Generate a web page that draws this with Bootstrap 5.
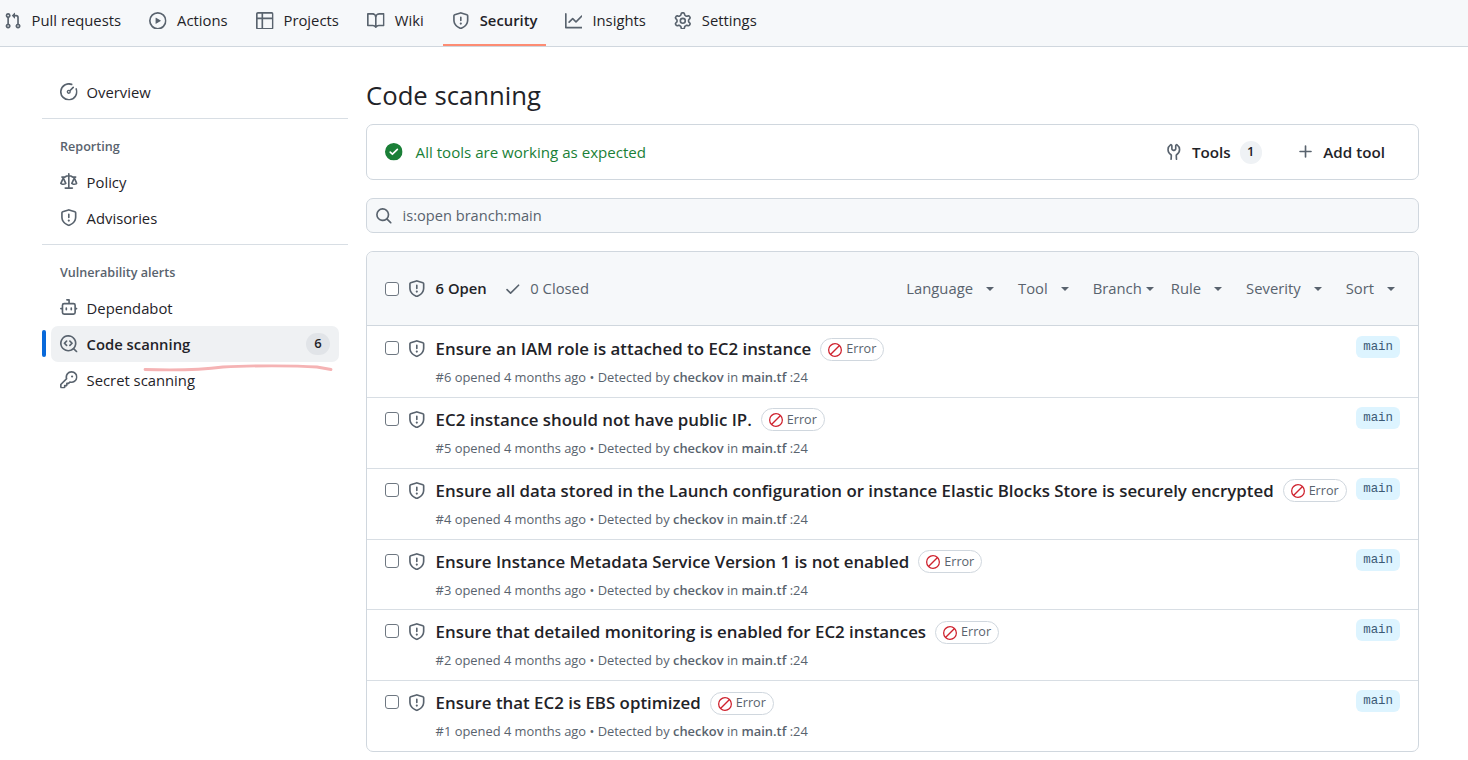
<!DOCTYPE html>
<html lang="en">
<head>
    <meta charset="UTF-8">
    <title>Code scanning</title>
    <link href="https://cdn.jsdelivr.net/npm/bootstrap@5.3.0/dist/css/bootstrap.min.css" rel="stylesheet">
    <style>
        body { font-family: "Open Sans", "Noto Sans", sans-serif; font-size: 14.8px; color: #1f2328; background: #fff; overflow: hidden; }
        svg.oct { width: 17.6px; height: 17.6px; fill: #59636e; flex: none; }

        .repo-tabs { height: 47px; background: #f6f8fa; border-bottom: 1px solid #d0d7de; padding-left: 4px; }
        .repo-tab { height: 46px; padding-bottom: 5px; margin-right: 28.4px; color: #1f2328; text-decoration: none; gap: 10px; }
        .repo-tab.active { font-weight: 600; border-bottom: 2px solid #fd8c73; padding: 0 9px 3px 9px; margin: 0 18.4px 0 -9px; }

        .page-wrap { padding: 0 49px 0 42px; gap: 18px; }
        .side-col { width: 306px; flex: none; padding-top: 27px; }
        .main-col { flex: 1; padding-top: 27px; min-width: 0; }

        .side-item { height: 36px; padding-left: 18px; gap: 9px; color: #1f2328; text-decoration: none; position: relative; margin-right: 9px; border-radius: 7px; }
        .side-item.current { background: #eff1f3; font-weight: 600; margin-left: 9px; padding-left: 9px; }
        .side-item.current::before { content: ""; position: absolute; left: -9px; top: 4px; bottom: 5px; width: 4px; border-radius: 3px; background: #0969da; }
        .side-head { font-size: 12.6px; font-weight: 600; color: #59636e; padding: 1px 0 0 18px; height: 28px; margin-bottom: 3px; display: flex; align-items: center; }
        .side-rule { border-top: 1px solid #d8dee4; margin: 8px 0 14px; }
        .count-pill { margin-left: auto; margin-right: 9px; background: #e1e4e8; border-radius: 12px; font-size: 13px; font-weight: 600; width: 24px; height: 22px; display: flex; align-items: center; justify-content: center; }
        .pink-mark { position: absolute; left: 94px; top: 38px; width: 186px; height: 8px; overflow: visible; pointer-events: none; }

        .page-title { font-size: 25.7px; font-weight: 400; line-height: 36px; margin: 4px 0 10px; }
        .tools-box { height: 56px; border: 1px solid #d0d7de; border-radius: 7px; padding: 0 33px 0 18px; }
        .tools-ok { color: #1a7f37; gap: 13px; font-size: 15.1px; }
        .tools-ok svg.oct { fill: #1a7f37; }
        .tool-link { font-weight: 600; gap: 9px; font-size: 15.2px; }
        .tool-num { background: #eff2f5; border-radius: 12px; width: 22px; height: 23px; font-size: 13px; display: flex; align-items: center; justify-content: center; margin-right: 35px; }
        .filter-box { height: 35px; margin: 18px 0; background: #f6f8fa; border: 1px solid #d0d7de; border-radius: 7px; padding-left: 8px; gap: 10px; color: #59636e; font-size: 14.6px; }

        .alerts-box { border: 1px solid #d0d7de; border-radius: 7px; }
        .alerts-top { height: 74px; background: #f6f8fa; border-bottom: 1px solid #d0d7de; border-radius: 7px 7px 0 0; padding: 0 23px 0 18px; }
        .tick { width: 14px; height: 14px; border: 1px solid #6e7781; border-radius: 3px; flex: none; background: #fff; margin-right: 9px; }
        .alert-row .tick { margin-top: 5px; }
        .row-shield { margin-right: 10px; }
        .open-count { font-weight: 600; }
        .closed-count { color: #59636e; gap: 9px; margin-left: 17px; }
        .filter-menu { color: #59636e; margin-left: auto; }
        .filter-item { display: flex; align-items: center; }
        .caret-down { border-top: 4px solid #59636e; border-left: 4px solid transparent; border-right: 4px solid transparent; width: 0; height: 0; margin: 0 24px 0 13px; }
        .caret-down.tight { margin: 0 17px 0 4px; }
        .caret-down.last { margin-right: 0; }

        .alert-row { height: 70.85px; padding: 9px 18px 0 18px; border-top: 1px solid #d8dee4; }
        .alert-row:first-child { border-top: 0; padding-top: 10px; }
        .alert-title { font-size: 16.85px; font-weight: 600; line-height: 26px; white-space: nowrap; }
        .alert-meta { font-size: 12.9px; color: #59636e; line-height: 18px; margin-top: 6px; }
        .alert-meta b { font-weight: 600; }
        .error-tag { border: 1px solid #d0d7de; border-radius: 12px; font-size: 12.6px; color: #59636e; height: 23px; padding: 1px 7px 0; gap: 4px; margin-left: 9px; font-weight: 400; }
        .error-tag svg.oct { fill: #cf222e; width: 14px; height: 14px; }
        .branch-tag { font-family: "Liberation Mono", monospace; font-size: 12.4px; background: #ddf4ff; color: #3b5a75; border-radius: 6px; padding: 0 7px; height: 22px; line-height: 22px; margin-left: auto; }
    </style>
</head>
<body>
    <svg width="0" height="0" class="position-absolute">
        <symbol id="i-pr" viewBox="0 0 16 16"><path d="M1.5 3.25a2.25 2.25 0 1 1 3 2.122v5.256a2.251 2.251 0 1 1-1.5 0V5.372A2.25 2.25 0 0 1 1.5 3.25Zm5.677-.177L9.573.677A.25.25 0 0 1 10 .854V2.5h1A2.5 2.5 0 0 1 13.5 5v5.628a2.251 2.251 0 1 1-1.5 0V5a1 1 0 0 0-1-1h-1v1.646a.25.25 0 0 1-.427.177L7.177 3.427a.25.25 0 0 1 0-.354ZM3.75 2.5a.75.75 0 1 0 0 1.5.75.75 0 0 0 0-1.5Zm0 9.5a.75.75 0 1 0 0 1.5.75.75 0 0 0 0-1.5Zm8.25.75a.75.75 0 1 0 1.5 0 .75.75 0 0 0-1.5 0Z"/></symbol>
        <symbol id="i-play" viewBox="0 0 16 16"><path d="M8 0a8 8 0 1 1 0 16A8 8 0 0 1 8 0ZM1.5 8a6.5 6.5 0 1 0 13 0 6.5 6.5 0 0 0-13 0Zm4.879-2.773 4.264 2.559a.25.25 0 0 1 0 .428l-4.264 2.559A.25.25 0 0 1 6 10.559V5.442a.25.25 0 0 1 .379-.215Z"/></symbol>
        <symbol id="i-table" viewBox="0 0 16 16"><path d="M0 1.75C0 .784.784 0 1.75 0h12.5C15.216 0 16 .784 16 1.75v12.5A1.75 1.75 0 0 1 14.25 16H1.75A1.75 1.75 0 0 1 0 14.25ZM6.5 6.5v8h7.75a.25.25 0 0 0 .25-.25V6.5Zm8-1.5V1.75a.25.25 0 0 0-.25-.25H6.5V5Zm-13 1.5v7.75c0 .138.112.25.25.25H5v-8ZM5 5V1.5H1.75a.25.25 0 0 0-.25.25V5Z"/></symbol>
        <symbol id="i-book" viewBox="0 0 16 16"><path d="M0 1.75A.75.75 0 0 1 .75 1h4.253c1.227 0 2.317.59 3 1.501A3.743 3.743 0 0 1 11.006 1h4.245a.75.75 0 0 1 .75.75v10.5a.75.75 0 0 1-.75.75h-4.507a2.25 2.25 0 0 0-1.591.659l-.622.621a.75.75 0 0 1-1.06 0l-.622-.621A2.25 2.25 0 0 0 5.258 13H.75a.75.75 0 0 1-.75-.75Zm7.251 10.324.004-5.073-.002-2.253A2.25 2.25 0 0 0 5.003 2.5H1.5v9h3.757a3.75 3.75 0 0 1 1.994.574ZM8.755 4.75l-.004 7.322a3.752 3.752 0 0 1 1.992-.572H14.5v-9h-3.495a2.25 2.25 0 0 0-2.25 2.25Z"/></symbol>
        <symbol id="i-shield" viewBox="0 0 16 16"><path d="M7.467.133a1.748 1.748 0 0 1 1.066 0l5.25 1.68A1.75 1.75 0 0 1 15 3.48V7c0 1.566-.32 3.182-1.303 4.682-.983 1.498-2.585 2.813-5.032 3.855a1.697 1.697 0 0 1-1.33 0c-2.447-1.042-4.049-2.357-5.032-3.855C1.32 10.182 1 8.566 1 7V3.48a1.75 1.75 0 0 1 1.217-1.667Zm.61 1.429a.25.25 0 0 0-.153 0l-5.25 1.68a.25.25 0 0 0-.174.238V7c0 1.358.275 2.666 1.057 3.86.784 1.194 2.121 2.34 4.366 3.297a.196.196 0 0 0 .154 0c2.245-.956 3.582-2.104 4.366-3.298C13.225 9.666 13.5 8.36 13.5 7V3.48a.25.25 0 0 0-.174-.237l-5.25-1.68ZM8.75 4.75v3a.75.75 0 0 1-1.5 0v-3a.75.75 0 0 1 1.5 0ZM9 10.5a1 1 0 1 1-2 0 1 1 0 0 1 2 0Z"/></symbol>
        <symbol id="i-graph" viewBox="0 0 16 16"><path d="M1.5 1.75V13.5h13.75a.75.75 0 0 1 0 1.5H.75a.75.75 0 0 1-.75-.75V1.75a.75.75 0 0 1 1.5 0Zm14.28 2.53-5.25 5.25a.75.75 0 0 1-1.06 0L7 7.06 4.28 9.78a.751.751 0 0 1-1.042-.018.751.751 0 0 1-.018-1.042l3.25-3.25a.75.75 0 0 1 1.06 0L10 7.94l4.72-4.72a.751.751 0 0 1 1.042.018.751.751 0 0 1 .018 1.042Z"/></symbol>
        <symbol id="i-gear" viewBox="0 0 16 16"><path d="M8 0a8.2 8.2 0 0 1 .701.031C9.444.095 9.99.645 10.16 1.29l.288 1.107c.018.066.079.158.212.224.231.114.454.243.668.386.123.082.233.09.299.071l1.103-.303c.644-.176 1.392.021 1.82.63.27.385.506.792.704 1.218.315.675.111 1.422-.364 1.891l-.814.806c-.049.048-.098.147-.088.294.016.257.016.515 0 .772-.01.147.038.246.088.294l.814.806c.475.469.679 1.216.364 1.891a7.977 7.977 0 0 1-.704 1.217c-.428.61-1.176.807-1.82.63l-1.102-.302c-.067-.019-.177-.011-.3.071a5.909 5.909 0 0 1-.668.386c-.133.066-.194.158-.211.224l-.29 1.106c-.168.646-.715 1.196-1.458 1.26a8.006 8.006 0 0 1-1.402 0c-.743-.064-1.289-.614-1.458-1.26l-.289-1.106c-.018-.066-.079-.158-.212-.224a5.738 5.738 0 0 1-.668-.386c-.123-.082-.233-.09-.299-.071l-1.103.303c-.644.176-1.392-.021-1.82-.63a8.12 8.12 0 0 1-.704-1.218c-.315-.675-.111-1.422.363-1.891l.815-.806c.05-.048.098-.147.088-.294a6.214 6.214 0 0 1 0-.772c.01-.147-.038-.246-.088-.294l-.815-.806C.635 6.045.431 5.298.746 4.623a7.92 7.92 0 0 1 .704-1.217c.428-.61 1.176-.807 1.82-.63l1.102.302c.067.019.177.011.3-.071.214-.143.437-.272.668-.386.133-.066.194-.158.211-.224l.29-1.106C6.009.645 6.556.095 7.299.03 7.53.01 7.764 0 8 0Zm-.571 1.525c-.036.003-.108.036-.137.146l-.289 1.105c-.147.561-.549.967-.998 1.189-.173.086-.34.183-.5.29-.417.278-.97.423-1.529.27l-1.103-.303c-.109-.03-.175.016-.195.045-.22.312-.412.644-.573.99-.014.031-.021.11.059.19l.815.806c.411.406.562.957.53 1.456a4.709 4.709 0 0 0 0 .582c.032.499-.119 1.05-.53 1.456l-.815.806c-.081.08-.073.159-.059.19.162.346.353.677.573.989.02.03.085.076.195.046l1.102-.303c.56-.153 1.113-.008 1.53.27.161.107.328.204.501.29.447.222.85.629.997 1.189l.289 1.105c.029.109.101.143.137.146a6.6 6.6 0 0 0 1.142 0c.036-.003.108-.036.137-.146l.289-1.105c.147-.561.549-.967.998-1.189.173-.086.34-.183.5-.29.417-.278.97-.423 1.529-.27l1.103.303c.109.029.175-.016.195-.045.22-.313.411-.644.573-.99.014-.031.021-.11-.059-.19l-.815-.806c-.411-.406-.562-.957-.53-1.456a4.709 4.709 0 0 0 0-.582c-.032-.499.119-1.05.53-1.456l.815-.806c.081-.08.073-.159.059-.19a6.464 6.464 0 0 0-.573-.989c-.02-.03-.085-.076-.195-.046l-1.102.303c-.56.153-1.113.008-1.53-.27a4.44 4.44 0 0 0-.501-.29c-.447-.222-.85-.629-.997-1.189l-.289-1.105c-.029-.11-.101-.143-.137-.146a6.6 6.6 0 0 0-1.142 0ZM11 8a3 3 0 1 1-6 0 3 3 0 0 1 6 0ZM9.5 8a1.5 1.5 0 1 0-3.001.001A1.5 1.5 0 0 0 9.5 8Z"/></symbol>
        <symbol id="i-meter" viewBox="0 0 16 16"><path fill="none" stroke="#59636e" stroke-width="1.5" stroke-linecap="round" d="M10.6 1.25A7.25 7.25 0 1 0 14.75 5.4M9.2 6.8l2.8-2.8"/><circle cx="8" cy="8" r="1.3" fill="none" stroke="#59636e" stroke-width="1.2"/></symbol>
        <symbol id="i-law" viewBox="0 0 16 16"><path d="M8.75.75V2h.985c.304 0 .603.08.867.231l1.29.736c.038.022.08.033.124.033h2.234a.75.75 0 0 1 0 1.5h-.427l2.111 4.692a.75.75 0 0 1-.154.838l-.53-.53.529.531-.001.002-.002.002-.006.006-.006.005-.01.01-.045.04c-.21.176-.441.327-.686.45C14.556 10.78 13.88 11 13 11a4.498 4.498 0 0 1-2.023-.454 3.544 3.544 0 0 1-.686-.45l-.045-.04-.016-.015-.006-.006-.004-.004v-.001a.75.75 0 0 1-.154-.838L12.178 4.5h-.162c-.305 0-.604-.079-.868-.231l-1.29-.736a.245.245 0 0 0-.124-.033H8.75V13h2.5a.75.75 0 0 1 0 1.5h-6.5a.75.75 0 0 1 0-1.5h2.5V3.5h-.984a.245.245 0 0 0-.124.033l-1.289.737c-.265.15-.564.23-.869.23h-.162l2.112 4.692a.75.75 0 0 1-.154.838l-.53-.53.529.531-.001.002-.002.002-.006.006-.016.015-.045.04c-.21.176-.441.327-.686.45C4.556 10.78 3.88 11 3 11a4.498 4.498 0 0 1-2.023-.454 3.544 3.544 0 0 1-.686-.45l-.045-.04-.016-.015-.006-.006-.004-.004v-.001a.75.75 0 0 1-.154-.838L2.178 4.5H1.75a.75.75 0 0 1 0-1.5h2.234a.249.249 0 0 0 .125-.033l1.288-.737c.265-.15.564-.23.869-.23h.984V.75a.75.75 0 0 1 1.5 0Zm2.945 8.477c.285.135.718.273 1.305.273s1.02-.138 1.305-.273L13 6.327Zm-10 0c.285.135.718.273 1.305.273s1.02-.138 1.305-.273L3 6.327Z"/></symbol>
        <symbol id="i-bot" viewBox="0 0 16 16"><path d="M5.75 7.5a.75.75 0 0 1 .75.75v1.5a.75.75 0 0 1-1.5 0v-1.5a.75.75 0 0 1 .75-.75Zm5.25.75a.75.75 0 0 0-1.5 0v1.5a.75.75 0 0 0 1.5 0v-1.5Z"/><path d="M6.25 0h2A.75.75 0 0 1 9 .75V3.5h3.25a2.25 2.25 0 0 1 2.25 2.25V8h.75a.75.75 0 0 1 0 1.5h-.75v2.75a2.25 2.25 0 0 1-2.25 2.25h-8.5a2.25 2.25 0 0 1-2.25-2.25V9.5H.75a.75.75 0 0 1 0-1.5h.75V5.75A2.25 2.25 0 0 1 3.75 3.5H7.5v-2H6.25a.75.75 0 0 1 0-1.5ZM3 5.75v6.5c0 .414.336.75.75.75h8.5a.75.75 0 0 0 .75-.75v-6.5a.75.75 0 0 0-.75-.75h-8.5a.75.75 0 0 0-.75.75Z"/></symbol>
        <symbol id="i-scan" viewBox="0 0 16 16"><path d="M8.47 4.97a.75.75 0 0 0 0 1.06L9.94 7.5 8.47 8.97a.75.75 0 1 0 1.06 1.06l2-2a.75.75 0 0 0 0-1.06l-2-2a.75.75 0 0 0-1.06 0ZM6.53 6.03a.75.75 0 0 0-1.06-1.06l-2 2a.75.75 0 0 0 0 1.06l2 2a.75.75 0 1 0 1.06-1.06L5.06 7.5l1.47-1.47Z"/><path d="M12.246 13.307a7.501 7.501 0 1 1 1.06-1.06l2.474 2.473a.749.749 0 0 1-.326 1.275.749.749 0 0 1-.734-.215ZM1.5 7.5a6.002 6.002 0 0 0 3.608 5.504 6.002 6.002 0 0 0 6.486-1.117.748.748 0 0 1 .292-.293A6 6 0 1 0 1.5 7.5Z"/></symbol>
        <symbol id="i-key" viewBox="0 0 16 16"><path d="M10.5 0a5.499 5.499 0 1 1-1.288 10.848l-.932.932a.749.749 0 0 1-.53.22H7v.75a.749.749 0 0 1-.22.53l-.5.5a.749.749 0 0 1-.53.22H5v.75a.749.749 0 0 1-.22.53l-.5.5a.749.749 0 0 1-.53.22h-2A1.75 1.75 0 0 1 0 14.25v-2c0-.199.079-.389.22-.53l4.932-4.932A5.5 5.5 0 0 1 10.5 0Zm-4 5.5c-.001.431.069.86.205 1.269a.75.75 0 0 1-.181.768L1.5 12.56v1.69c0 .138.112.25.25.25h1.69l.06-.06v-1.19a.75.75 0 0 1 .75-.75h1.19l.06-.06v-1.19a.75.75 0 0 1 .75-.75h1.19l1.023-1.025a.75.75 0 0 1 .768-.18A4 4 0 1 0 6.5 5.5ZM11 6a1 1 0 1 1 0-2 1 1 0 0 1 0 2Z"/></symbol>
        <symbol id="i-search" viewBox="0 0 16 16"><path d="M10.68 11.74a6 6 0 0 1-7.922-8.982 6 6 0 0 1 8.982 7.922l3.04 3.04a.749.749 0 0 1-.326 1.275.749.749 0 0 1-.734-.215ZM11.5 7a4.499 4.499 0 1 0-8.997 0A4.499 4.499 0 0 0 11.5 7Z"/></symbol>
        <symbol id="i-okfill" viewBox="0 0 16 16"><path d="M8 16A8 8 0 1 1 8 0a8 8 0 0 1 0 16Zm3.78-9.72a.751.751 0 0 0-.018-1.042.751.751 0 0 0-1.042-.018L6.75 9.19 5.28 7.72a.751.751 0 0 0-1.042.018.751.751 0 0 0-.018 1.042l2 2a.75.75 0 0 0 1.06 0Z"/></symbol>
        <symbol id="i-check" viewBox="0 0 16 16"><path d="M13.78 4.22a.75.75 0 0 1 0 1.06l-7.25 7.25a.75.75 0 0 1-1.06 0L2.22 9.28a.751.751 0 0 1 .018-1.042.751.751 0 0 1 1.042-.018L6 10.94l6.72-6.72a.75.75 0 0 1 1.06 0Z"/></symbol>
        <symbol id="i-plus" viewBox="0 0 16 16"><path d="M7.75 2a.75.75 0 0 1 .75.75V7h4.25a.75.75 0 0 1 0 1.5H8.5v4.25a.75.75 0 0 1-1.5 0V8.5H2.75a.75.75 0 0 1 0-1.5H7V2.75A.75.75 0 0 1 7.75 2Z"/></symbol>
        <symbol id="i-tools" viewBox="0 0 16 16"><path d="M5.433 2.304A4.492 4.492 0 0 0 3.5 6c0 1.598.832 3.002 2.09 3.802.518.328.929.923.902 1.64v.008l-.164 3.337a.75.75 0 1 1-1.498-.073l.163-3.33c.002-.085-.05-.216-.207-.316A5.996 5.996 0 0 1 2 6a5.993 5.993 0 0 1 2.567-4.92 1.482 1.482 0 0 1 1.673-.04c.462.296.76.827.76 1.423v2.82c0 .082.041.16.11.206l.75.51a.25.25 0 0 0 .28 0l.75-.51A.249.249 0 0 0 9 5.282V2.463c0-.596.298-1.127.76-1.423a1.482 1.482 0 0 1 1.673.04A5.993 5.993 0 0 1 14 6a5.996 5.996 0 0 1-2.786 5.068c-.157.1-.209.23-.207.315l.163 3.33a.75.75 0 1 1-1.498.074l-.164-3.345c-.027-.717.384-1.312.902-1.64A4.495 4.495 0 0 0 12.5 6a4.492 4.492 0 0 0-1.933-3.696c-.024-.017-.067-.067-.067.16v2.818a1.75 1.75 0 0 1-.768 1.449l-.75.51a1.75 1.75 0 0 1-1.964 0l-.75-.51A1.75 1.75 0 0 1 5.5 5.282V2.463c0-.227-.043-.177-.067-.16Z"/></symbol>
        <symbol id="i-nope" viewBox="0 0 16 16"><path d="M8 0a8 8 0 1 1 0 16A8 8 0 0 1 8 0ZM1.5 8c0 1.52.52 2.91 1.39 4.02l9.13-9.13A6.5 6.5 0 0 0 1.5 8Zm13 0c0-1.52-.52-2.91-1.39-4.02l-9.13 9.13A6.5 6.5 0 0 0 14.5 8Z"/></symbol>
    </svg>

    <nav class="repo-tabs d-flex align-items-center">
        <a class="repo-tab d-flex align-items-center" href="#"><svg class="oct"><use href="#i-pr"/></svg>Pull requests</a>
        <a class="repo-tab d-flex align-items-center" href="#"><svg class="oct"><use href="#i-play"/></svg>Actions</a>
        <a class="repo-tab d-flex align-items-center" href="#"><svg class="oct"><use href="#i-table"/></svg>Projects</a>
        <a class="repo-tab d-flex align-items-center" href="#"><svg class="oct"><use href="#i-book"/></svg>Wiki</a>
        <a class="repo-tab active d-flex align-items-center" href="#"><svg class="oct"><use href="#i-shield"/></svg>Security</a>
        <a class="repo-tab d-flex align-items-center" href="#"><svg class="oct"><use href="#i-graph"/></svg>Insights</a>
        <a class="repo-tab d-flex align-items-center" href="#"><svg class="oct"><use href="#i-gear"/></svg>Settings</a>
    </nav>

    <div class="page-wrap d-flex">
        <aside class="side-col">
            <a class="side-item d-flex align-items-center" href="#"><svg class="oct"><use href="#i-meter"/></svg>Overview</a>
            <div class="side-rule"></div>
            <div class="side-head">Reporting</div>
            <a class="side-item d-flex align-items-center" href="#"><svg class="oct"><use href="#i-law"/></svg>Policy</a>
            <a class="side-item d-flex align-items-center" href="#"><svg class="oct"><use href="#i-shield"/></svg>Advisories</a>
            <div class="side-rule"></div>
            <div class="side-head">Vulnerability alerts</div>
            <a class="side-item d-flex align-items-center" href="#"><svg class="oct"><use href="#i-bot"/></svg>Dependabot</a>
            <a class="side-item current d-flex align-items-center" href="#"><svg class="oct"><use href="#i-scan"/></svg>Code scanning<span class="count-pill">6</span>
                <svg class="pink-mark" viewBox="0 0 186 8"><path d="M0 5.5 C30 6.5 55 6 78 3 C105 1.5 150 1.5 172 3 L186 5.5" fill="none" stroke="#f5b3b4" stroke-width="2.8" stroke-linecap="round"/></svg>
            </a>
            <a class="side-item d-flex align-items-center" href="#"><svg class="oct"><use href="#i-key"/></svg>Secret scanning</a>
        </aside>

        <main class="main-col">
            <h1 class="page-title">Code scanning</h1>
            <div class="tools-box d-flex align-items-center">
                <div class="tools-ok d-flex align-items-center"><svg class="oct"><use href="#i-okfill"/></svg>All tools are working as expected</div>
                <div class="tool-link d-flex align-items-center ms-auto"><svg class="oct"><use href="#i-tools"/></svg>Tools<span class="tool-num">1</span></div>
                <div class="tool-link d-flex align-items-center"><svg class="oct"><use href="#i-plus"/></svg>Add tool</div>
            </div>
            <div class="filter-box d-flex align-items-center"><svg class="oct"><use href="#i-search"/></svg>is:open branch:main</div>

            <div class="alerts-box">
                <div class="alerts-top d-flex align-items-center">
                    <span class="tick"></span>
                    <svg class="oct row-shield"><use href="#i-shield"/></svg>
                    <span class="open-count">6 Open</span>
                    <span class="closed-count d-flex align-items-center"><svg class="oct"><use href="#i-check"/></svg>0 Closed</span>
                    <div class="filter-menu d-flex">
                        <span class="filter-item">Language<i class="caret-down"></i></span>
                        <span class="filter-item">Tool<i class="caret-down"></i></span>
                        <span class="filter-item">Branch<i class="caret-down tight"></i></span>
                        <span class="filter-item">Rule<i class="caret-down"></i></span>
                        <span class="filter-item">Severity<i class="caret-down"></i></span>
                        <span class="filter-item">Sort<i class="caret-down last"></i></span>
                    </div>
                </div>
                <div id="alert-list"></div>
            </div>
        </main>
    </div>

    <script src="https://cdn.jsdelivr.net/npm/bootstrap@5.3.0/dist/js/bootstrap.bundle.min.js"></script>
    <script>
        const alerts = [
            [6, 'Ensure an IAM role is attached to EC2 instance'],
            [5, 'EC2 instance should not have public IP.'],
            [4, 'Ensure all data stored in the Launch configuration or instance Elastic Blocks Store is securely encrypted'],
            [3, 'Ensure Instance Metadata Service Version 1 is not enabled'],
            [2, 'Ensure that detailed monitoring is enabled for EC2 instances'],
            [1, 'Ensure that EC2 is EBS optimized']
        ];
        document.getElementById('alert-list').innerHTML = alerts.map(([num, title]) => `
            <div class="alert-row d-flex">
                <span class="tick"></span>
                <svg class="oct row-shield mt-1"><use href="#i-shield"/></svg>
                <div>
                    <div class="d-flex align-items-center">
                        <span class="alert-title">${title}</span>
                        <span class="error-tag d-inline-flex align-items-center"><svg class="oct"><use href="#i-nope"/></svg>Error</span>
                    </div>
                    <div class="alert-meta">#${num} opened 4 months ago • Detected by <b>checkov</b> in <b>main.tf</b> :24</div>
                </div>
                <span class="branch-tag">main</span>
            </div>`).join('');
    </script>
</body>
</html>
